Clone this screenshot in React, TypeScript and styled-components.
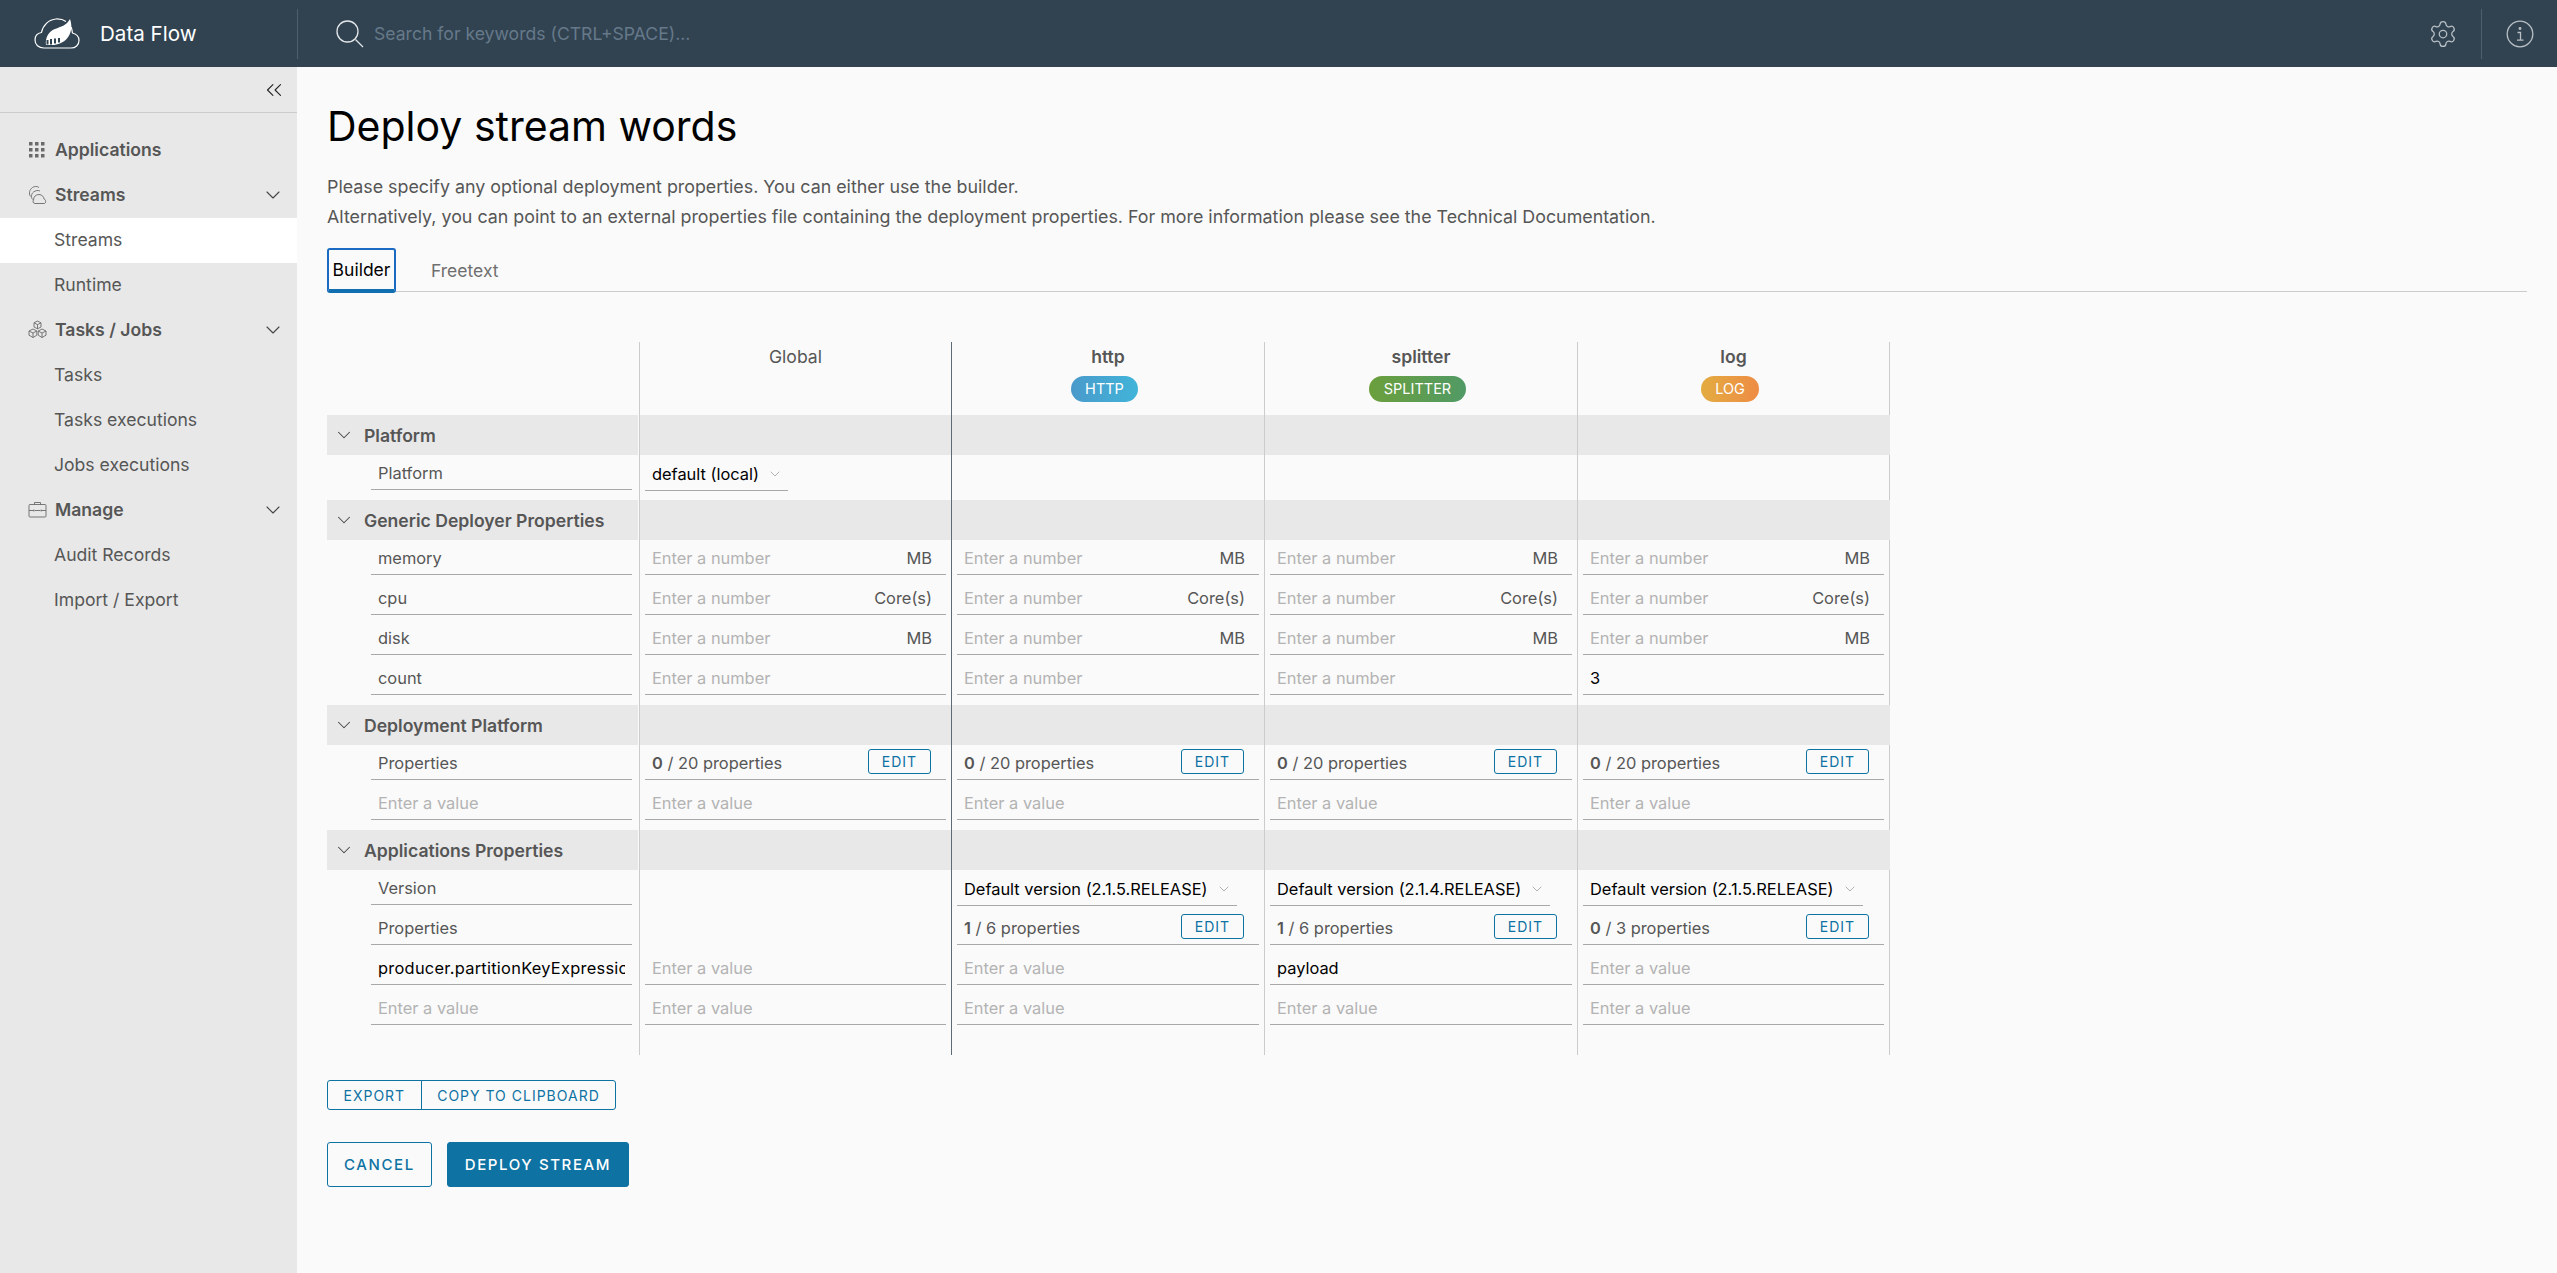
import React from 'react';
import styled, { createGlobalStyle } from 'styled-components';
import { ChevronDown, ChevronsLeft, Settings } from 'lucide-react';

const FONT = `Inter, "Open Sans", "Liberation Sans", sans-serif`;

const GlobalStyle = createGlobalStyle`
    html, body {
        margin: 0;
        padding: 0;
        background: #fafafa;
    }
    body {
        font-family: ${FONT};
        color: #565656;
        overflow: hidden;
    }
    * {
        box-sizing: border-box;
    }
`;

const LogoIcon = () => (
    <svg width="46" height="32" viewBox="0 0 46 32" fill="none">
        <path
            d="M10 30C4.500 30 1 26.500 1 22C1 17.500 4 15 7.500 14.500C9 7 15 1.500 22 1C26 0.800 29.500 1.800 32 3.500"
            stroke="#fff"
            strokeWidth="1.200"
        />
        <path
            d="M37 9C38.500 12 38 14 38.500 15C42.500 16 45 18.500 45 22.500C45 27 41.500 30 37 30L10 30"
            stroke="#fff"
            strokeWidth="1.200"
        />
        <path
            d="M36 1C38.500 8 37.500 15.500 33 20.500C29.500 24.500 24 27 18 27L12 27C11 20 14.500 13.500 21 11C27 8.500 32 8 36 1Z"
            fill="#fff"
        />
        <path d="M12.500 22h2v4.500h-2zM16 21h2v5.500h-2zM20 20.500h2v5h-2zM24 20h2v4.500h-2z" fill="#314351" />
    </svg>
);

const SearchIcon = () => (
    <svg width="28" height="28" viewBox="0 0 28 28" fill="none" stroke="#e3e7ea" strokeWidth="1.300">
        <circle cx="11.500" cy="11.500" r="10.500" />
        <path d="M19.500 19.500L27 27" />
    </svg>
);

const InfoIcon = () => (
    <svg width="28" height="28" viewBox="0 0 28 28" fill="none" stroke="#b9c0c6" strokeWidth="1.300">
        <circle cx="14" cy="14" r="12.800" />
        <path d="M11.500 12.500H14.500V20M11 20.200H17.500" />
        <circle cx="14" cy="8.500" r="0.800" fill="#b9c0c6" />
    </svg>
);

const AppsIcon = () => (
    <svg width="18" height="18" viewBox="0 0 18 18" fill="#6a6a6a">
        {[1, 7, 13].map((y) =>
            [1, 7, 13].map((x) => <rect key={`${x}-${y}`} x={x} y={y} width="3.500" height="3.500" />)
        )}
    </svg>
);

const StreamsIcon = () => (
    <svg width="20" height="20" viewBox="0 0 20 20" fill="none" stroke="#6a6a6a" strokeWidth="0.900">
        <path d="M7 18.500C5 18.500 4.500 16 5.500 15C5.500 11.500 8 9.500 11 9.500C14 9.500 16 12 16 14C18 14.500 18.500 18.500 16 18.500Z" />
        <path d="M4.500 14.500C3 12.500 3 9 5.500 7C7.500 5.500 10 5 12 6M13 8" />
        <path d="M2.500 11.500C0.500 8.500 1.500 4.500 4.500 2.500C6.500 1.200 9 1 11 2.500" />
    </svg>
);

const CubesIcon = () => (
    <svg width="19" height="19" viewBox="0 0 19 19" fill="none" stroke="#6a6a6a" strokeWidth="0.900">
        <path d="M9.500 1L13 2.800V7L9.500 8.800L6 7V2.800ZM6 2.800L9.500 4.600L13 2.800M9.500 4.600V8.800" />
        <path d="M5 9L8.800 11V15.200L5 17.500L1 15.200V11ZM1 11L5 13L8.800 11M5 13V17.500" />
        <path d="M14 9L18 11V15.200L14 17.500L10.200 15.200V11ZM10.200 11L14 13L18 11M14 13V17.500" />
    </svg>
);

const BriefcaseIcon = () => (
    <svg width="19" height="19" viewBox="0 0 19 19" fill="none" stroke="#6a6a6a" strokeWidth="0.900">
        <rect x="1" y="4.500" width="17" height="12.500" rx="1" />
        <path d="M6.500 4.500V2.500H12.500V4.500M1 10.500H6M13 10.500H18M7 10.500H12" />
        <path d="M6 9.500V11.500M13 9.500V11.500" />
    </svg>
);

const NumberField = ({ unit, value }: { unit?: string; value?: string }) => (
    <Field>
        <TextInput placeholder="Enter a number" defaultValue={value} readOnly />
        {unit && <Unit>{unit}</Unit>}
    </Field>
);

const ValueField = ({ value }: { value?: string }) => (
    <Field>
        <TextInput placeholder="Enter a value" defaultValue={value} readOnly />
    </Field>
);

const PropertiesField = ({ count, total }: { count: number; total: number }) => (
    <Field>
        <PropText>
            <b>{count}</b> / {total} properties
        </PropText>
        <EditButton>Edit</EditButton>
    </Field>
);

const SelectField = ({ label }: { label: string }) => (
    <SelectBox>
        <span>{label}</span>
        <ChevronDown size={16} strokeWidth={1} color="#8c8c8c" />
    </SelectBox>
);

const SectionHead = ({ title }: { title: string }) => (
    <Row>
        <HeadLabel>
            <ChevronDown size={22} strokeWidth={1.100} color="#444" />
            <span>{title}</span>
        </HeadLabel>
        {[0, 1, 2, 3].map((i) => (
            <HeadCell key={i} $strong={i === 1} $last={i === 3} />
        ))}
    </Row>
);

const DataRow = ({ label, filled, cells }: { label: React.ReactNode; filled?: boolean; cells: React.ReactNode[] }) => (
    <Row>
        <LabelCell>
            <LabelText $filled={filled}>{label}</LabelText>
        </LabelCell>
        {cells.map((c, i) => (
            <Cell key={i} $strong={i === 1} $last={i === 3}>
                {c}
            </Cell>
        ))}
    </Row>
);

const Spacer = ({ tall }: { tall?: boolean }) => (
    <Row $height={tall ? 25 : 5}>
        <div />
        {[0, 1, 2, 3].map((i) => (
            <Cell key={i} $strong={i === 1} $last={i === 3} />
        ))}
    </Row>
);

const numbers = (unit?: string, last?: string) => [
    <NumberField unit={unit} />,
    <NumberField unit={unit} />,
    <NumberField unit={unit} />,
    <NumberField unit={unit} value={last} />,
];

const App = () => {
    const apps = [
        { name: 'http', badge: 'HTTP', from: '#4a9acb', to: '#41b4d9' },
        { name: 'splitter', badge: 'SPLITTER', from: '#6b9f3c', to: '#519a66' },
        { name: 'log', badge: 'LOG', from: '#e3ac41', to: '#ee8c45' },
    ];

    return (
        <>
            <GlobalStyle />
            <Header>
                <Brand>
                    <LogoIcon />
                    <BrandName>Data Flow</BrandName>
                </Brand>
                <SearchBox>
                    <SearchIcon />
                    <SearchText>Search for keywords (CTRL+SPACE)...</SearchText>
                </SearchBox>
                <HeaderAction>
                    <Settings size={30} strokeWidth={1} color="#b9c0c6" />
                </HeaderAction>
                <HeaderAction $divided>
                    <InfoIcon />
                </HeaderAction>
            </Header>
            <Body>
                <Sidebar>
                    <Collapse>
                        <ChevronsLeft size={26} strokeWidth={1} color="#222" />
                    </Collapse>
                    <Nav>
                        <NavGroup>
                            <NavIcon>
                                <AppsIcon />
                            </NavIcon>
                            Applications
                        </NavGroup>
                        <NavGroup>
                            <NavIcon>
                                <StreamsIcon />
                            </NavIcon>
                            Streams
                            <NavCaret>
                                <ChevronDown size={24} strokeWidth={1.100} color="#444" />
                            </NavCaret>
                        </NavGroup>
                        <NavItem $active>Streams</NavItem>
                        <NavItem>Runtime</NavItem>
                        <NavGroup>
                            <NavIcon>
                                <CubesIcon />
                            </NavIcon>
                            Tasks / Jobs
                            <NavCaret>
                                <ChevronDown size={24} strokeWidth={1.100} color="#444" />
                            </NavCaret>
                        </NavGroup>
                        <NavItem>Tasks</NavItem>
                        <NavItem>Tasks executions</NavItem>
                        <NavItem>Jobs executions</NavItem>
                        <NavGroup>
                            <NavIcon>
                                <BriefcaseIcon />
                            </NavIcon>
                            Manage
                            <NavCaret>
                                <ChevronDown size={24} strokeWidth={1.100} color="#444" />
                            </NavCaret>
                        </NavGroup>
                        <NavItem>Audit Records</NavItem>
                        <NavItem>Import / Export</NavItem>
                    </Nav>
                </Sidebar>
                <Main>
                    <Title>Deploy stream words</Title>
                    <Intro>
                        Please specify any optional deployment properties. You can either use the builder.
                        <br />
                        Alternatively, you can point to an external properties file containing the deployment properties.
                        For more information please see the Technical Documentation.
                    </Intro>
                    <Tabs>
                        <Tab $active>Builder</Tab>
                        <Tab>Freetext</Tab>
                    </Tabs>
                    <Table>
                        <Row $height={73}>
                            <div />
                            <ColHead>Global</ColHead>
                            {apps.map((a, i) => (
                                <ColHead key={a.name} $strong={i === 0} $last={i === 2}>
                                    <AppName>{a.name}</AppName>
                                    <Badge $from={a.from} $to={a.to}>
                                        {a.badge}
                                    </Badge>
                                </ColHead>
                            ))}
                        </Row>
                        <SectionHead title="Platform" />
                        <DataRow label="Platform" cells={[<SelectField label="default (local)" />, null, null, null]} />
                        <Spacer />
                        <SectionHead title="Generic Deployer Properties" />
                        <DataRow label="memory" cells={numbers('MB')} />
                        <DataRow label="cpu" cells={numbers('Core(s)')} />
                        <DataRow label="disk" cells={numbers('MB')} />
                        <DataRow label="count" cells={numbers(undefined, '3')} />
                        <Spacer />
                        <SectionHead title="Deployment Platform" />
                        <DataRow
                            label="Properties"
                            cells={[0, 1, 2, 3].map(() => (
                                <PropertiesField count={0} total={20} />
                            ))}
                        />
                        <DataRow
                            label={<Placeholder>Enter a value</Placeholder>}
                            cells={[<ValueField />, <ValueField />, <ValueField />, <ValueField />]}
                        />
                        <Spacer />
                        <SectionHead title="Applications Properties" />
                        <DataRow
                            label="Version"
                            cells={[
                                null,
                                <SelectField label="Default version (2.1.5.RELEASE)" />,
                                <SelectField label="Default version (2.1.4.RELEASE)" />,
                                <SelectField label="Default version (2.1.5.RELEASE)" />,
                            ]}
                        />
                        <DataRow
                            label="Properties"
                            cells={[
                                null,
                                <PropertiesField count={1} total={6} />,
                                <PropertiesField count={1} total={6} />,
                                <PropertiesField count={0} total={3} />,
                            ]}
                        />
                        <DataRow
                            filled
                            label={<KeyClip>producer.partitionKeyExpression</KeyClip>}
                            cells={[<ValueField />, <ValueField />, <ValueField value="payload" />, <ValueField />]}
                        />
                        <DataRow
                            label={<Placeholder>Enter a value</Placeholder>}
                            cells={[<ValueField />, <ValueField />, <ValueField />, <ValueField />]}
                        />
                        <Spacer tall />
                    </Table>
                    <ButtonGroup>
                        <GroupButton>Export</GroupButton>
                        <GroupButton>Copy to clipboard</GroupButton>
                    </ButtonGroup>
                    <Actions>
                        <ActionButton>Cancel</ActionButton>
                        <ActionButton $primary>Deploy stream</ActionButton>
                    </Actions>
                </Main>
            </Body>
        </>
    );
};
export default App;

const Header = styled.header`
    height: 67px;
    background: #314351;
    display: flex;
    align-items: center;
`;
const Brand = styled.div`
    width: 298px;
    height: 50px;
    padding-left: 34px;
    display: flex;
    align-items: center;
    gap: 20px;
    border-right: 1px solid #4e5f6c;
`;
const BrandName = styled.div`
    color: #fff;
    font-size: 20.600px;
`;
const SearchBox = styled.div`
    flex-grow: 1;
    display: flex;
    align-items: center;
    gap: 10px;
    padding-left: 38px;
`;
const SearchText = styled.div`
    color: #66798a;
    font-size: 17.600px;
`;
const HeaderAction = styled.div<{ $divided?: boolean }>`
    height: 50px;
    width: ${(p) => (p.$divided ? '76px' : '77px')};
    display: flex;
    align-items: center;
    justify-content: center;
    border-left: ${(p) => (p.$divided ? '1px solid #4e5f6c' : 'none')};
`;
const Body = styled.div`
    display: flex;
    height: 1206px;
`;
const Sidebar = styled.aside`
    width: 297px;
    flex-shrink: 0;
    background: #e8e8e8;
`;
const Collapse = styled.div`
    height: 46px;
    padding-right: 10px;
    display: flex;
    align-items: center;
    justify-content: flex-end;
    border-bottom: 1px solid #ccc;
`;
const Nav = styled.nav`
    padding-top: 15px;
`;
const NavGroup = styled.div`
    height: 45px;
    padding-left: 28px;
    padding-bottom: 2px;
    display: flex;
    align-items: center;
    font-size: 17.600px;
    font-weight: 600;
    color: #565656;
`;
const NavIcon = styled.span`
    width: 27px;
    display: flex;
    align-items: center;
`;
const NavCaret = styled.span`
    margin-left: auto;
    padding-right: 12px;
    display: flex;
`;
const NavItem = styled.div<{ $active?: boolean }>`
    height: 45px;
    padding-left: 54px;
    padding-bottom: 2px;
    display: flex;
    align-items: center;
    font-size: 17.600px;
    color: #565656;
    background: ${(p) => (p.$active ? '#fff' : 'transparent')};
`;
const Main = styled.main`
    flex-grow: 1;
    padding: 29px 30px 0;
    background: #fafafa;
`;
const Title = styled.h1`
    margin: 0 0 16px;
    font-size: 41px;
    line-height: 60px;
    font-weight: 400;
    color: #000;
`;
const Intro = styled.p`
    margin: 0 0 16px;
    font-size: 17.830px;
    line-height: 30px;
    color: #565656;
`;
const Tabs = styled.div`
    height: 44px;
    display: flex;
    gap: 35px;
    border-bottom: 1px solid #ccc;
`;
const Tab = styled.div<{ $active?: boolean }>`
    height: 45px;
    width: ${(p) => (p.$active ? '69px' : 'auto')};
    display: flex;
    align-items: center;
    justify-content: center;
    font-size: 17.500px;
    color: ${(p) => (p.$active ? '#000' : '#6f6f6f')};
    border: ${(p) => (p.$active ? '2px solid #1a6ac2' : 'none')};
    border-bottom: ${(p) => (p.$active ? '4px solid #0f6fb0' : 'none')};
    border-radius: 3px;
`;
const Table = styled.div`
    margin-top: 50px;
`;
const Row = styled.div<{ $height?: number }>`
    display: grid;
    grid-template-columns: 312px 312px 313px 313px 313px;
    height: ${(p) => p.$height ?? 40}px;
`;
const Cell = styled.div<{ $strong?: boolean; $last?: boolean }>`
    border-left: 1px solid ${(p) => (p.$strong ? '#5e6a74' : '#ccc')};
    border-right: ${(p) => (p.$last ? '1px solid #ccc' : 'none')};
    padding: 0 5px;
    min-width: 0;
`;
const HeadCell = styled(Cell)`
    background: #e8e8e8;
    border-right: none;
`;
const HeadLabel = styled.div`
    background: #e8e8e8;
    margin-right: 1px;
    padding-left: 6px;
    display: flex;
    align-items: center;
    gap: 9px;
    font-size: 17.600px;
    font-weight: 600;
    color: #565656;
`;
const LabelCell = styled.div`
    padding: 0 7px 0 44px;
    min-width: 0;
`;
const LabelText = styled.div<{ $filled?: boolean }>`
    height: 35px;
    padding-left: 7px;
    padding-top: 2px;
    display: flex;
    align-items: center;
    font-size: 16.400px;
    overflow: hidden;
    white-space: nowrap;
    color: ${(p) => (p.$filled ? '#000' : '#565656')};
    border-bottom: 1px solid #a8a8a8;
`;
const Placeholder = styled.span`
    color: #b3b3b3;
`;
const KeyClip = styled.span`
    display: block;
    width: 247px;
    overflow: hidden;
    letter-spacing: 0.270px;
`;
const Field = styled.div`
    height: 35px;
    padding: 1px 15px 0 7px;
    display: flex;
    align-items: center;
    justify-content: space-between;
    border-bottom: 1px solid #a8a8a8;
`;
const TextInput = styled.input`
    flex: 1;
    min-width: 0;
    border: none;
    outline: none;
    padding: 0;
    background: transparent;
    font-family: ${FONT};
    font-size: 16.400px;
    color: #000;
    &::placeholder {
        color: #b3b3b3;
        opacity: 1;
    }
`;
const Unit = styled.span`
    margin-right: -1px;
    font-size: 16.400px;
    color: #565656;
`;
const PropText = styled.span`
    font-size: 16.400px;
    color: #565656;
    b {
        font-weight: 600;
    }
`;
const EditButton = styled.button`
    width: 63px;
    height: 25px;
    padding: 0;
    margin-top: -2px;
    background: transparent;
    border: 1px solid #0e72a3;
    border-radius: 3px;
    color: #0e72a3;
    font-family: ${FONT};
    font-size: 14px;
    letter-spacing: 1px;
    text-transform: uppercase;
`;
const SelectBox = styled.div`
    display: inline-flex;
    align-items: center;
    gap: 8px;
    height: 36px;
    padding: 3px 5px 0 7px;
    font-size: 16.400px;
    color: #000;
    border-bottom: 1px solid #a8a8a8;
`;
const ColHead = styled(Cell)`
    padding-top: 5px;
    display: flex;
    flex-direction: column;
    align-items: center;
    font-size: 17.600px;
    line-height: 20px;
    border-right: ${(p) => (p.$last ? '1px solid #ccc' : 'none')};
`;
const AppName = styled.div`
    font-weight: 600;
`;
const Badge = styled.div<{ $from: string; $to: string }>`
    margin: 9px 7px 0 0;
    height: 26px;
    padding: 0 14.500px;
    display: flex;
    align-items: center;
    border-radius: 13px;
    font-size: 14.500px;
    color: #fff;
    background: linear-gradient(90deg, ${(p) => p.$from}, ${(p) => p.$to});
`;
const ButtonGroup = styled.div`
    margin-top: 25px;
    display: inline-flex;
    height: 30px;
    border: 1px solid #0e72a3;
    border-radius: 3px;
`;
const GroupButton = styled.button`
    padding: 0 15.500px;
    background: transparent;
    border: none;
    color: #0e72a3;
    font-family: ${FONT};
    font-size: 14px;
    letter-spacing: 1px;
    text-transform: uppercase;
    & + & {
        border-left: 1px solid #0e72a3;
    }
`;
const Actions = styled.div`
    margin-top: 32px;
    display: flex;
    gap: 15px;
`;
const ActionButton = styled.button<{ $primary?: boolean }>`
    height: 45px;
    padding: 0 ${(p) => (p.$primary ? '17px' : '16px')};
    border: 1px solid #0e72a3;
    border-radius: 3px;
    background: ${(p) => (p.$primary ? '#0e72a3' : 'transparent')};
    color: ${(p) => (p.$primary ? '#fff' : '#0e72a3')};
    font-family: ${FONT};
    font-size: 15px;
    font-weight: 500;
    letter-spacing: 1.600px;
    text-transform: uppercase;
`;
